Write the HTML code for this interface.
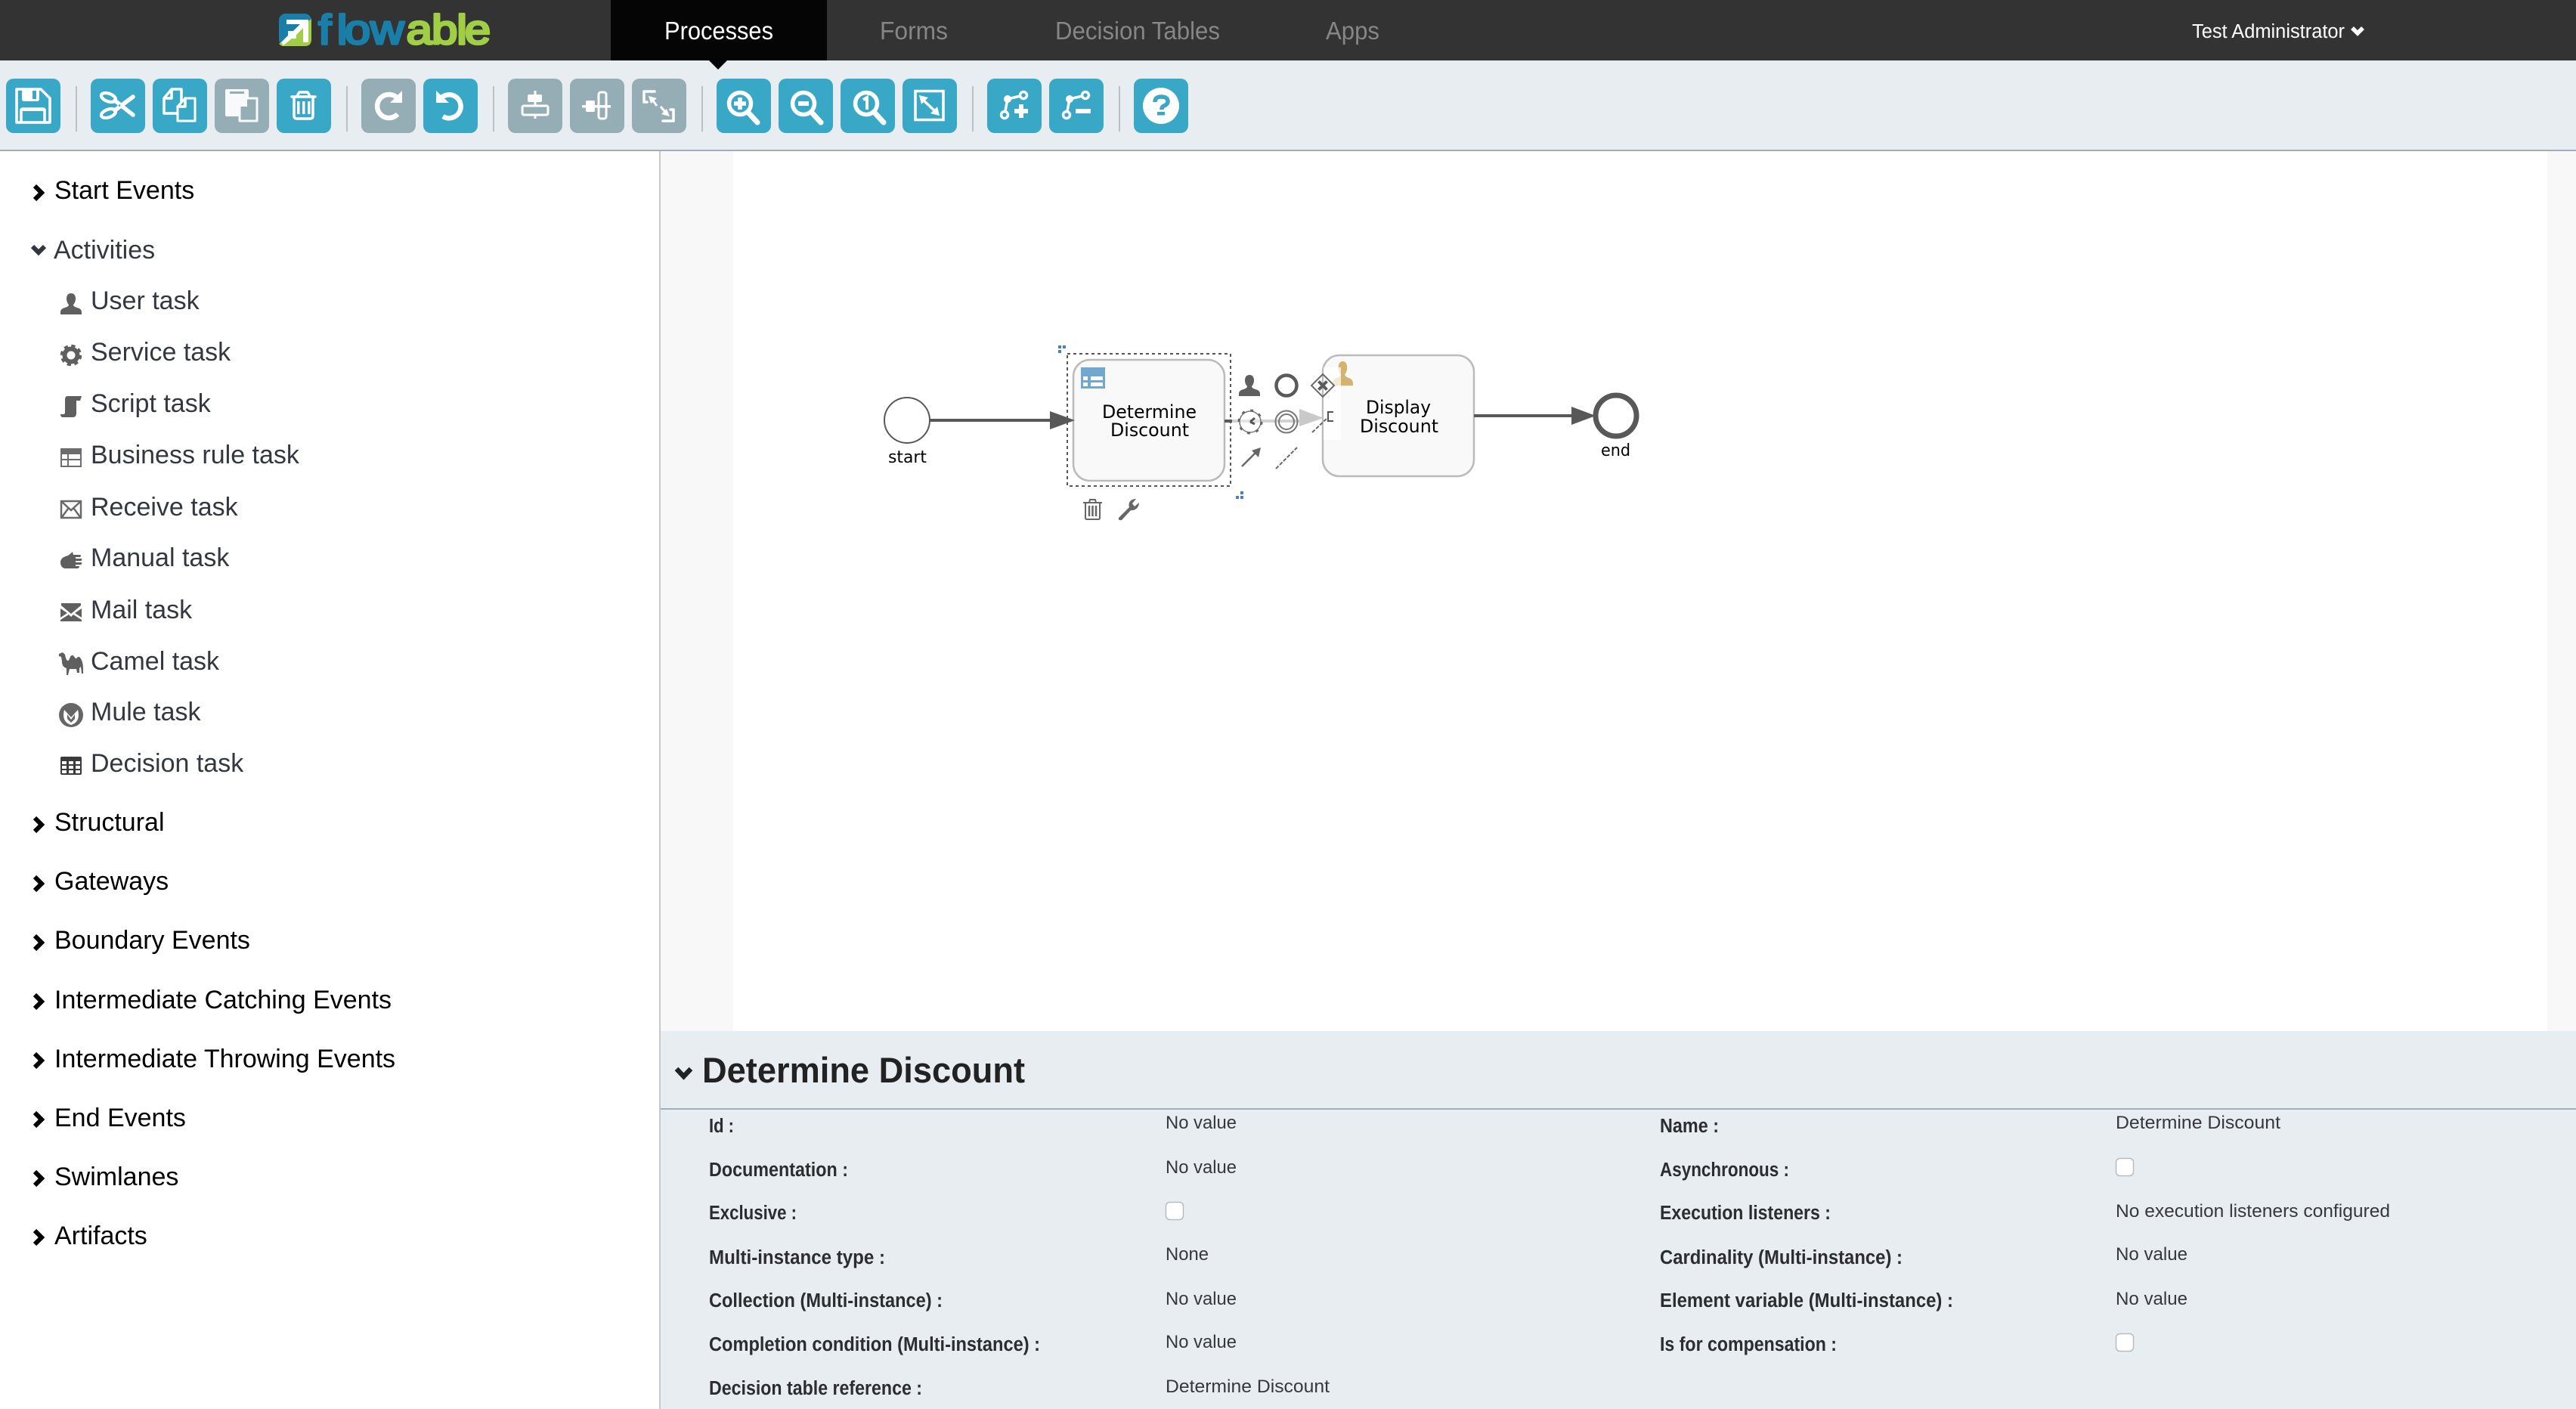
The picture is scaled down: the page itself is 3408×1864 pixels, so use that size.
<!DOCTYPE html>
<html lang="en"><head><meta charset="utf-8"><title>Flowable Process Editor</title>
<style>
html,body{margin:0;padding:0;background:#fff;width:3408px;height:1864px;overflow:hidden}
svg{display:block;position:absolute;left:0;top:0}
text{white-space:pre}
.n{font:33px "Liberation Sans",sans-serif}
.s{font:34px "Liberation Sans",sans-serif;fill:#000}
.t{font:34px "Liberation Sans",sans-serif;fill:#333740}
.l{font:bold 25.5px "Liberation Sans",sans-serif;fill:#2b2d30}
.v{font:24.5px "Liberation Sans",sans-serif;fill:#36383b}
.d{font:23.8px "DejaVu Sans",sans-serif;fill:#000}
.w{fill:none;stroke:#fff;stroke-width:3.5;stroke-linecap:round;stroke-linejoin:round}
.f{fill:#fff;stroke:none}
.ic{fill:#5f5f5f}
</style></head><body>
<svg width="3408" height="1864" viewBox="0 0 3408 1864" xmlns="http://www.w3.org/2000/svg">
<!-- backgrounds -->
<rect width="3408" height="1864" fill="#fff"/>
<rect x="874" y="200" width="96" height="1164" fill="#f8f8f8"/>
<rect x="3370" y="200" width="38" height="1164" fill="#f8f8f8"/>
<rect x="872" y="200" width="2" height="1664" fill="#c6c9cc"/>
<rect x="874" y="1364" width="2534" height="500" fill="#e8edf1"/>
<rect x="874" y="1466" width="2534" height="2" fill="#a4adbb"/>
<!-- header -->
<rect width="3408" height="80" fill="#333"/>
<rect x="808" width="286" height="80" fill="#050505"/>
<rect y="80" width="3408" height="118" fill="#e8edf1"/>
<rect y="198" width="3408" height="2" fill="#a4adbb"/>
<path d="M938 80H962L950 92Z" fill="#050505"/>
<!-- logo -->
<rect x="369" y="18" width="43" height="43" rx="9" fill="#1a7fa8"/>
<path d="M412 25V52Q412 61 403 61H373L369 58Z" fill="#a0cf47"/>
<path d="M372 56L381 47V41L388 41L397 32H379V26H408V56H401V37L392 46V51H386L375 60Z" fill="#fff"/>
<g font-family="'Liberation Sans',sans-serif" font-size="55" stroke-width="3.2" stroke-linejoin="round" transform="scale(1.12,1)">
<text x="376 398 407 437.5" y="58" fill="#1a7fa8" stroke="#1a7fa8">flow</text>
<text x="480 510 539.5 549" y="58" fill="#a0cf47" stroke="#a0cf47">able</text>
</g>
<!-- nav -->
<text class="n" x="879" y="52" fill="#fff" textLength="144" lengthAdjust="spacingAndGlyphs">Processes</text>
<text class="n" x="1164" y="52" fill="#868686" textLength="90" lengthAdjust="spacingAndGlyphs">Forms</text>
<text class="n" x="1396" y="52" fill="#868686" textLength="218" lengthAdjust="spacingAndGlyphs">Decision Tables</text>
<text class="n" x="1754" y="52" fill="#868686" textLength="71" lengthAdjust="spacingAndGlyphs">Apps</text>
<text x="2900" y="50" fill="#fff" font-family="'Liberation Sans',sans-serif" font-size="25.5" textLength="202" lengthAdjust="spacingAndGlyphs">Test Administrator</text>
<path d="M3112 37L3119 44L3126 37" fill="none" stroke="#fff" stroke-width="5.5"/>
<!-- toolbar separators -->
<g fill="#bbbfc6">
<rect x="100" y="114" width="2" height="60"/><rect x="458" y="114" width="2" height="60"/><rect x="652" y="114" width="2" height="60"/><rect x="928" y="114" width="2" height="60"/><rect x="1286" y="114" width="2" height="60"/><rect x="1480" y="114" width="2" height="60"/>
</g>
<!-- buttons -->
<g fill="#39a7c6">
<rect x="8" y="104" width="72" height="72" rx="10"/><rect x="120" y="104" width="72" height="72" rx="10"/><rect x="202" y="104" width="72" height="72" rx="10"/><rect x="366" y="104" width="72" height="72" rx="10"/><rect x="560" y="104" width="72" height="72" rx="10"/>
<rect x="948" y="104" width="72" height="72" rx="10"/><rect x="1030" y="104" width="72" height="72" rx="10"/><rect x="1112" y="104" width="72" height="72" rx="10"/><rect x="1194" y="104" width="72" height="72" rx="10"/><rect x="1306" y="104" width="72" height="72" rx="10"/><rect x="1388" y="104" width="72" height="72" rx="10"/><rect x="1500" y="104" width="72" height="72" rx="10"/>
</g>
<g fill="#95adb5">
<rect x="284" y="104" width="72" height="72" rx="10"/><rect x="478" y="104" width="72" height="72" rx="10"/><rect x="672" y="104" width="72" height="72" rx="10"/><rect x="754" y="104" width="72" height="72" rx="10"/><rect x="836" y="104" width="72" height="72" rx="10"/>
</g>
<!-- save -->
<g transform="translate(8,104)">
<path class="w" d="M14 14H46L58 26V58H14Z" stroke-linejoin="round"/>
<path class="f" d="M21 14H44V27Q44 30 41 30H24Q21 30 21 27Z"/><rect x="35" y="16" width="5" height="11" fill="#39a7c6"/>
<path class="w" d="M20 57V42Q20 40 22 40H49Q51 40 51 42V57"/><rect x="20" y="39" width="31" height="4" fill="#fff"/>
</g>
<!-- scissors -->
<g transform="translate(120,104)">
<ellipse cx="23.5" cy="25" rx="10" ry="5.2" transform="rotate(20 23.5 25)" fill="none" stroke="#fff" stroke-width="4.2"/>
<ellipse cx="23.5" cy="46" rx="10" ry="5.2" transform="rotate(-20 23.5 46)" fill="none" stroke="#fff" stroke-width="4.2"/>
<path d="M32 29L56 48" fill="none" stroke="#fff" stroke-width="5.5" stroke-linecap="round"/>
<path d="M32 42L56 24" fill="none" stroke="#fff" stroke-width="5.5" stroke-linecap="round"/>
<circle cx="38" cy="35.5" r="1.3" fill="#39a7c6"/>
</g>
<!-- copy -->
<g transform="translate(202,104)">
<path class="w" d="M25 14H38V30M32 46H15V26L25 14V26H15" stroke-width="3"/>
<path d="M43 26H56V56H33V37Z" fill="#39a7c6" stroke="#fff" stroke-width="3" stroke-linejoin="round"/>
<path class="w" d="M43 26V37H33" stroke-width="3"/>
</g>
<!-- paste -->
<g transform="translate(284,104)">
<rect x="14" y="14" width="31" height="36" rx="2" fill="#f8f9fa"/>
<rect x="20" y="17" width="19" height="3" fill="#95adb5"/>
<path d="M43 26H56V56H33V37Z" fill="#95adb5" stroke="#f8f9fa" stroke-width="3" stroke-linejoin="round"/>
<path d="M33 37L43 26V37Z" fill="#f8f9fa"/>
</g>
<!-- trash -->
<g transform="translate(366,104)">
<path class="w" d="M20 24H51" stroke-width="3"/>
<path class="w" d="M27 23L30 18H41L44 23" stroke-width="3"/>
<path class="w" d="M23 26V49Q23 53 27 53H44Q48 53 48 49V26" stroke-width="3"/>
<rect x="27" y="30" width="3.5" height="17" fill="#fff"/><rect x="34" y="30" width="3.5" height="17" fill="#fff"/><rect x="41" y="30" width="3.5" height="17" fill="#fff"/>
</g>
<!-- redo / undo -->
<g transform="translate(478,104)" fill="none" stroke="#fff" stroke-width="6.5">
<path d="M48 26A15.5 15.5 0 1 0 48 47"/><path d="M38 32H54V16Z" fill="#fff" stroke="none"/>
</g>
<g transform="translate(560,104)" fill="none" stroke="#fff" stroke-width="6.5">
<path d="M23 26A15.5 15.5 0 1 1 26 50"/><path d="M34 32H17V16Z" fill="#fff" stroke="none"/>
</g>
<!-- align -->
<g transform="translate(672,104)">
<rect x="34.5" y="16" width="3" height="37" fill="#fff"/><rect x="26" y="21" width="19" height="10" rx="2" fill="#fff"/>
<rect x="19" y="36" width="34" height="12" rx="2" fill="#95adb5" stroke="#fff" stroke-width="3"/>
</g>
<g transform="translate(754,104)">
<rect x="21" y="29" width="12" height="15" rx="2" fill="#fff"/>
<rect x="38" y="18" width="10" height="35" rx="3" fill="#95adb5" stroke="#fff" stroke-width="3"/>
<rect x="16" y="35" width="38" height="3.5" fill="#fff"/>
</g>
<g transform="translate(836,104)">
<path class="w" d="M30 17H16V31H20" stroke-width="3"/><path class="w" d="M41 56H55V41H51" stroke-width="3"/>
<path d="M22 23L33 26L25 33Z" fill="#fff"/><path d="M27 28L33 36" stroke="#fff" stroke-width="3"/>
<path d="M50 50L39 47L46 40Z" fill="#fff"/><path d="M38 37L44 44" stroke="#fff" stroke-width="3"/>
</g>
<!-- zoom -->
<g transform="translate(948,104)" fill="none" stroke="#fff"><circle cx="31" cy="33" r="14.5" stroke-width="5.5"/><path d="M43 46L54 58" stroke-width="7" stroke-linecap="round"/><path d="M23 33H39M31 25V41" stroke-width="5.5"/></g>
<g transform="translate(1030,104)" fill="none" stroke="#fff"><circle cx="33" cy="33" r="14.5" stroke-width="5.5"/><path d="M45 46L56 58" stroke-width="7" stroke-linecap="round"/><path d="M26 33H40" stroke-width="6"/></g>
<g transform="translate(1112,104)" fill="none" stroke="#fff"><circle cx="34" cy="33" r="14.5" stroke-width="5.5"/><path d="M46 46L57 58" stroke-width="7" stroke-linecap="round"/><path d="M30 28L35 25V41" stroke-width="4"/></g>
<g transform="translate(1194,104)">
<rect x="17" y="16.5" width="37" height="38" fill="none" stroke="#fff" stroke-width="3.5"/>
<path d="M22 22L34 25L25 34Z" fill="#fff"/><path d="M49 49L37 46L46 37Z" fill="#fff"/><path d="M27 28L44 44" stroke="#fff" stroke-width="3.5"/>
</g>
<!-- bendpoints -->
<g transform="translate(1306,104)" stroke="#fff" fill="none">
<path d="M27 27L48 22M27 27L23 48" stroke-width="3.5"/><circle cx="27" cy="27" r="5" fill="#fff" stroke="none"/>
<circle cx="48" cy="22" r="4.5" fill="#39a7c6" stroke-width="3.5"/><circle cx="23" cy="48" r="4.5" fill="#39a7c6" stroke-width="3.5"/>
<path d="M36 43H54M45 34V52" stroke-width="6"/>
</g>
<g transform="translate(1388,104)" stroke="#fff" fill="none">
<path d="M27 27L48 22M27 27L23 48" stroke-width="3.5"/><circle cx="27" cy="27" r="5" fill="#fff" stroke="none"/>
<circle cx="48" cy="22" r="4.5" fill="#39a7c6" stroke-width="3.5"/><circle cx="23" cy="48" r="4.5" fill="#39a7c6" stroke-width="3.5"/>
<path d="M35 43H55" stroke-width="6"/>
</g>
<!-- help -->
<g transform="translate(1500,104)">
<circle cx="36" cy="36" r="24" fill="#fff"/>
<path d="M28 31Q28 24 36 24Q45 24 45 30Q45 34 40 36Q37 37 37 41" fill="none" stroke="#39a7c6" stroke-width="5.5"/>
<rect x="31" y="44" width="10" height="4.5" fill="#39a7c6"/>
</g>
<!-- sidebar chevrons -->
<g fill="none" stroke="#000" stroke-width="6">
<path d="M46 246L55 255L46 264"/>
<path d="M46 1082L55 1091L46 1100"/><path d="M46 1160L55 1169L46 1178"/><path d="M46 1238L55 1247L46 1256"/><path d="M46 1316L55 1325L46 1334"/><path d="M46 1394L55 1403L46 1412"/><path d="M46 1472L55 1481L46 1490"/><path d="M46 1550L55 1559L46 1568"/><path d="M46 1628L55 1637L46 1646"/>
</g>
<path d="M43 326L51 334L59 326" fill="none" stroke="#333740" stroke-width="6"/>
<!-- sidebar groups -->
<text class="s" x="72" y="263">Start Events</text>
<text class="t" x="71" y="342">Activities</text>
<text class="s" x="72" y="1099">Structural</text>
<text class="s" x="72" y="1177">Gateways</text>
<text class="s" x="72" y="1255">Boundary Events</text>
<text class="s" x="72" y="1334">Intermediate Catching Events</text>
<text class="s" x="72" y="1412">Intermediate Throwing Events</text>
<text class="s" x="72" y="1490">End Events</text>
<text class="s" x="72" y="1568">Swimlanes</text>
<text class="s" x="72" y="1646">Artifacts</text>
<!-- sidebar items -->
<text class="t" x="120" y="409">User task</text>
<text class="t" x="120" y="477">Service task</text>
<text class="t" x="120" y="545">Script task</text>
<text class="t" x="120" y="613">Business rule task</text>
<text class="t" x="120" y="682">Receive task</text>
<text class="t" x="120" y="749">Manual task</text>
<text class="t" x="120" y="818">Mail task</text>
<text class="t" x="120" y="886">Camel task</text>
<text class="t" x="120" y="953">Mule task</text>
<text class="t" x="120" y="1021">Decision task</text>
<!-- sidebar icons -->
<path class="ic" id="u" transform="translate(80,388)" d="M14 0C18 0 20 3 20 7C20 10 19 13 17 15C17 17 19 18 22 19C25 20 28 21 28 25V28H0V25C0 21 3 20 6 19C9 18 11 17 11 15C9 13 8 10 8 7C8 3 10 0 14 0Z"/>
<g transform="translate(94,470)" fill="none" stroke="#5f5f5f"><circle r="8.5" stroke-width="6"/><circle r="12" stroke-width="4.5" stroke-dasharray="5 4.42"/></g>
<path class="ic" transform="translate(80,523)" d="M9 1H28L26 7H21V24Q21 29 16 29H3Q0 29 0 25H4Q6 25 6 22V6Q6 1 9 1Z"/>
<g transform="translate(80,593)"><rect width="28" height="25" fill="#6d6d6d"/><rect x="2" y="8" width="7" height="6" fill="#fff"/><rect x="11" y="8" width="15" height="6" fill="#fff"/><rect x="2" y="16" width="7" height="7" fill="#fff"/><rect x="11" y="16" width="15" height="7" fill="#fff"/></g>
<g transform="translate(80,662)" fill="none" stroke="#6a6a6a" stroke-width="2.5"><rect x="1" y="1" width="26" height="22"/><path d="M2 2L14 13L26 2M2 22L10 11M26 22L18 11"/></g>
<path class="ic" transform="translate(80,730)" d="M0 14C0 8 6 6 10 5L16 0L17 4H26Q28 5 26 7H20V9H28Q29 11 27 12H20V14H28Q29 16 27 17H20V19H25Q25 22 22 22H7C2 22 0 18 0 14Z"/>
<g transform="translate(80,798)" class="ic"><path d="M1 0H27V3L14 14L1 3Z"/><path d="M0 7L9 13L0 19Z"/><path d="M28 7L19 13L28 19Z"/><path d="M0 24V22L11 15L14 18L17 15L28 22V24Z"/></g>
<path class="ic" transform="translate(78,863)" d="M0 2L5 0L8 3C9 8 10 11 12 11C14 11 14 5 17 4C20 3 21 9 23 8C25 6 26 5 28 7C31 11 32 16 32 22V28H30L29 19L27 21V27H24L23 22H14L12 30H10V21C6 20 4 17 4 12L3 6L0 5Z"/>
<g transform="translate(94,946)"><circle r="16" fill="#666"/><path d="M-9 -7Q-13 9 0 13Q13 9 9 -7L0 3Z" fill="#fff"/><path d="M-5 -1L0 6L5 -1V5L0 10L-5 5Z" fill="#666"/></g>
<g transform="translate(80,1001)"><rect width="28" height="24" rx="2" fill="#3a3a3a"/><g fill="#fff"><rect x="2" y="6" width="6" height="4"/><rect x="11" y="6" width="6" height="4"/><rect x="20" y="6" width="6" height="4"/><rect x="2" y="12" width="6" height="4"/><rect x="11" y="12" width="6" height="4"/><rect x="20" y="12" width="6" height="4"/><rect x="2" y="18" width="6" height="4"/><rect x="11" y="18" width="6" height="4"/><rect x="20" y="18" width="6" height="4"/></g></g>
<!-- diagram -->
<circle cx="1200" cy="556" r="30" fill="#fff" stroke="#585858" stroke-width="2"/>
<text class="d" x="1175" y="612" font-size="22" style="font-size:22px" textLength="51" lengthAdjust="spacingAndGlyphs">start</text>
<rect x="1420" y="476" width="200" height="160" rx="22" fill="#f9f9f9" stroke="#bbb" stroke-width="2.5"/>
<rect x="1412" y="468" width="216" height="175" fill="none" stroke="#555" stroke-width="2" stroke-dasharray="4 4"/>
<path d="M1230 556H1392" stroke="#585858" stroke-width="4"/>
<path d="M1389 544L1422 556L1389 568Z" fill="#585858"/>
<g transform="translate(1430,486)"><rect width="32" height="28" fill="#72a7d0"/><g fill="#fff"><rect x="3" y="12" width="6" height="5"/><rect x="13" y="12" width="16" height="5"/><rect x="3" y="20" width="6" height="5"/><rect x="13" y="20" width="16" height="5"/></g></g>
<text class="d" x="1458" y="553" textLength="125" lengthAdjust="spacingAndGlyphs">Determine</text>
<text class="d" x="1469" y="577" textLength="104" lengthAdjust="spacingAndGlyphs">Discount</text>
<g fill="#4a7fc0"><rect x="1400" y="457" width="4" height="4"/><rect x="1406" y="457" width="4" height="4"/><rect x="1400" y="463" width="4" height="4"/><rect x="1641" y="650" width="4" height="4"/><rect x="1635" y="656" width="4" height="4"/><rect x="1641" y="656" width="4" height="4"/></g>
<!-- selection tools -->
<g transform="translate(1433,660)" fill="none" stroke="#666" stroke-width="2"><path d="M0 5H25M8 5L9 1H16L17 5"/><path d="M3 6V25Q3 27 5 27H20Q22 27 22 25V6"/><path d="M8 9V23M12.5 9V23M17 9V23" stroke-width="2.5"/></g>
<path d="M1480 685L1494 671C1492 665 1496 660 1503 660L1498 666L1501 670L1507 665C1507 671 1502 676 1496 675L1484 688Q1479 689 1480 685Z" fill="#666"/>
<!-- display task -->
<rect x="1750" y="470" width="200" height="160" rx="22" fill="#f9f9f9" stroke="#bbb" stroke-width="2.5"/>
<path fill="#d4b36e" transform="translate(1763,478) scale(.96,1.15)" d="M14 0C18 0 20 3 20 7C20 10 19 13 17 15C17 17 19 18 22 19C25 20 28 21 28 25V28H0V25C0 21 3 20 6 19C9 18 11 17 11 15C9 13 8 10 8 7C8 3 10 0 14 0Z"/>
<rect x="1751" y="486" width="23" height="96" fill="#fff" opacity=".72"/>
<text class="d" x="1807" y="547" textLength="86" lengthAdjust="spacingAndGlyphs">Display</text>
<text class="d" x="1799" y="572" textLength="104" lengthAdjust="spacingAndGlyphs">Discount</text>
<path d="M1950 550H2082" stroke="#585858" stroke-width="4"/>
<path d="M2079 538L2111 550L2079 562Z" fill="#585858"/>
<circle cx="2138" cy="550" r="27" fill="#fff" stroke="#585858" stroke-width="7"/>
<text class="d" x="2118" y="603" style="font-size:22px" textLength="39" lengthAdjust="spacingAndGlyphs">end</text>
<!-- ghost flow -->
<path d="M1620 557H1630" stroke="#585858" stroke-width="4"/>
<path d="M1630 557H1722" stroke="#d2d2d2" stroke-width="4"/>
<path d="M1719 541L1751 553L1719 564Z" fill="#c9c9c9"/>
<!-- shape palette -->
<path class="ic" transform="translate(1639,496)" d="M14 0C18 0 20 3 20 7C20 10 19 13 17 15C17 17 19 18 22 19C25 20 28 21 28 25V28H0V25C0 21 3 20 6 19C9 18 11 17 11 15C9 13 8 10 8 7C8 3 10 0 14 0Z"/>
<circle cx="1702" cy="510" r="13.5" fill="none" stroke="#5a5a5a" stroke-width="4.5"/>
<g fill="none" stroke="#6a6a6a"><path d="M1750 495L1765 510L1750 525L1735 510Z" stroke-width="2"/><path d="M1744.5 504.5L1755.5 515.5M1755.5 504.5L1744.5 515.5" stroke-width="4" stroke="#5a5a5a"/></g>
<circle cx="1654" cy="558" r="14" fill="#fff" fill-opacity=".4" stroke="#777" stroke-width="1.5"/>
<circle cx="1654" cy="558" r="15" fill="none" stroke="#666" stroke-width="3" stroke-dasharray="4 7.8"/>
<path d="M1654 558L1660 553M1654 558L1660 561" stroke="#555" stroke-width="3"/>
<circle cx="1702" cy="558" r="14.5" fill="none" stroke="#777" stroke-width="2"/><circle cx="1702" cy="558" r="10" fill="none" stroke="#777" stroke-width="2"/>
<path d="M1643 617L1662 598" stroke="#666" stroke-width="2.5"/><path d="M1668 592L1665 605L1656 596Z" fill="#666"/>
<path d="M1688 620L1716 592" stroke="#666" stroke-width="2" stroke-dasharray="5 2"/>
<path d="M1736 572L1756 553" stroke="#666" stroke-width="2" stroke-dasharray="5 2"/>
<path d="M1764 545H1757V557H1764" fill="none" stroke="#555" stroke-width="2"/>
<!-- properties -->
<path d="M895 1414L904.5 1424L914 1414" fill="none" stroke="#222" stroke-width="6.5"/>
<text x="929" y="1432" font-family="'Liberation Sans',sans-serif" font-weight="bold" font-size="47.5" fill="#222" textLength="427" lengthAdjust="spacingAndGlyphs">Determine Discount</text>
<text class="l" x="938" y="1498" textLength="33" lengthAdjust="spacingAndGlyphs">Id :</text>
<text class="l" x="938" y="1556" textLength="184" lengthAdjust="spacingAndGlyphs">Documentation :</text>
<text class="l" x="938" y="1613" textLength="116" lengthAdjust="spacingAndGlyphs">Exclusive :</text>
<text class="l" x="938" y="1672" textLength="233" lengthAdjust="spacingAndGlyphs">Multi-instance type :</text>
<text class="l" x="938" y="1729" textLength="309" lengthAdjust="spacingAndGlyphs">Collection (Multi-instance) :</text>
<text class="l" x="938" y="1787" textLength="438" lengthAdjust="spacingAndGlyphs">Completion condition (Multi-instance) :</text>
<text class="l" x="938" y="1845" textLength="282" lengthAdjust="spacingAndGlyphs">Decision table reference :</text>
<text class="v" x="1542" y="1493" textLength="94" lengthAdjust="spacingAndGlyphs">No value</text>
<text class="v" x="1542" y="1552" textLength="94" lengthAdjust="spacingAndGlyphs">No value</text>
<rect x="1542.5" y="1590.5" width="23" height="23" rx="5" fill="#fff" stroke="#bbb" stroke-width="1.5"/>
<text class="v" x="1542" y="1667" textLength="57" lengthAdjust="spacingAndGlyphs">None</text>
<text class="v" x="1542" y="1726" textLength="94" lengthAdjust="spacingAndGlyphs">No value</text>
<text class="v" x="1542" y="1783" textLength="94" lengthAdjust="spacingAndGlyphs">No value</text>
<text class="v" x="1542" y="1842" textLength="217" lengthAdjust="spacingAndGlyphs">Determine Discount</text>
<text class="l" x="2196" y="1498" textLength="78" lengthAdjust="spacingAndGlyphs">Name :</text>
<text class="l" x="2196" y="1556" textLength="171" lengthAdjust="spacingAndGlyphs">Asynchronous :</text>
<text class="l" x="2196" y="1613" textLength="226" lengthAdjust="spacingAndGlyphs">Execution listeners :</text>
<text class="l" x="2196" y="1672" textLength="321" lengthAdjust="spacingAndGlyphs">Cardinality (Multi-instance) :</text>
<text class="l" x="2196" y="1729" textLength="388" lengthAdjust="spacingAndGlyphs">Element variable (Multi-instance) :</text>
<text class="l" x="2196" y="1787" textLength="234" lengthAdjust="spacingAndGlyphs">Is for compensation :</text>
<text class="v" x="2799" y="1493" textLength="218" lengthAdjust="spacingAndGlyphs">Determine Discount</text>
<rect x="2799.5" y="1532.5" width="23" height="23" rx="5" fill="#fff" stroke="#bbb" stroke-width="1.5"/>
<text class="v" x="2799" y="1610" textLength="363" lengthAdjust="spacingAndGlyphs">No execution listeners configured</text>
<text class="v" x="2799" y="1667" textLength="95" lengthAdjust="spacingAndGlyphs">No value</text>
<text class="v" x="2799" y="1726" textLength="95" lengthAdjust="spacingAndGlyphs">No value</text>
<rect x="2799.5" y="1764.5" width="23" height="23" rx="5" fill="#fff" stroke="#bbb" stroke-width="1.5"/>
</svg>
</body></html>
